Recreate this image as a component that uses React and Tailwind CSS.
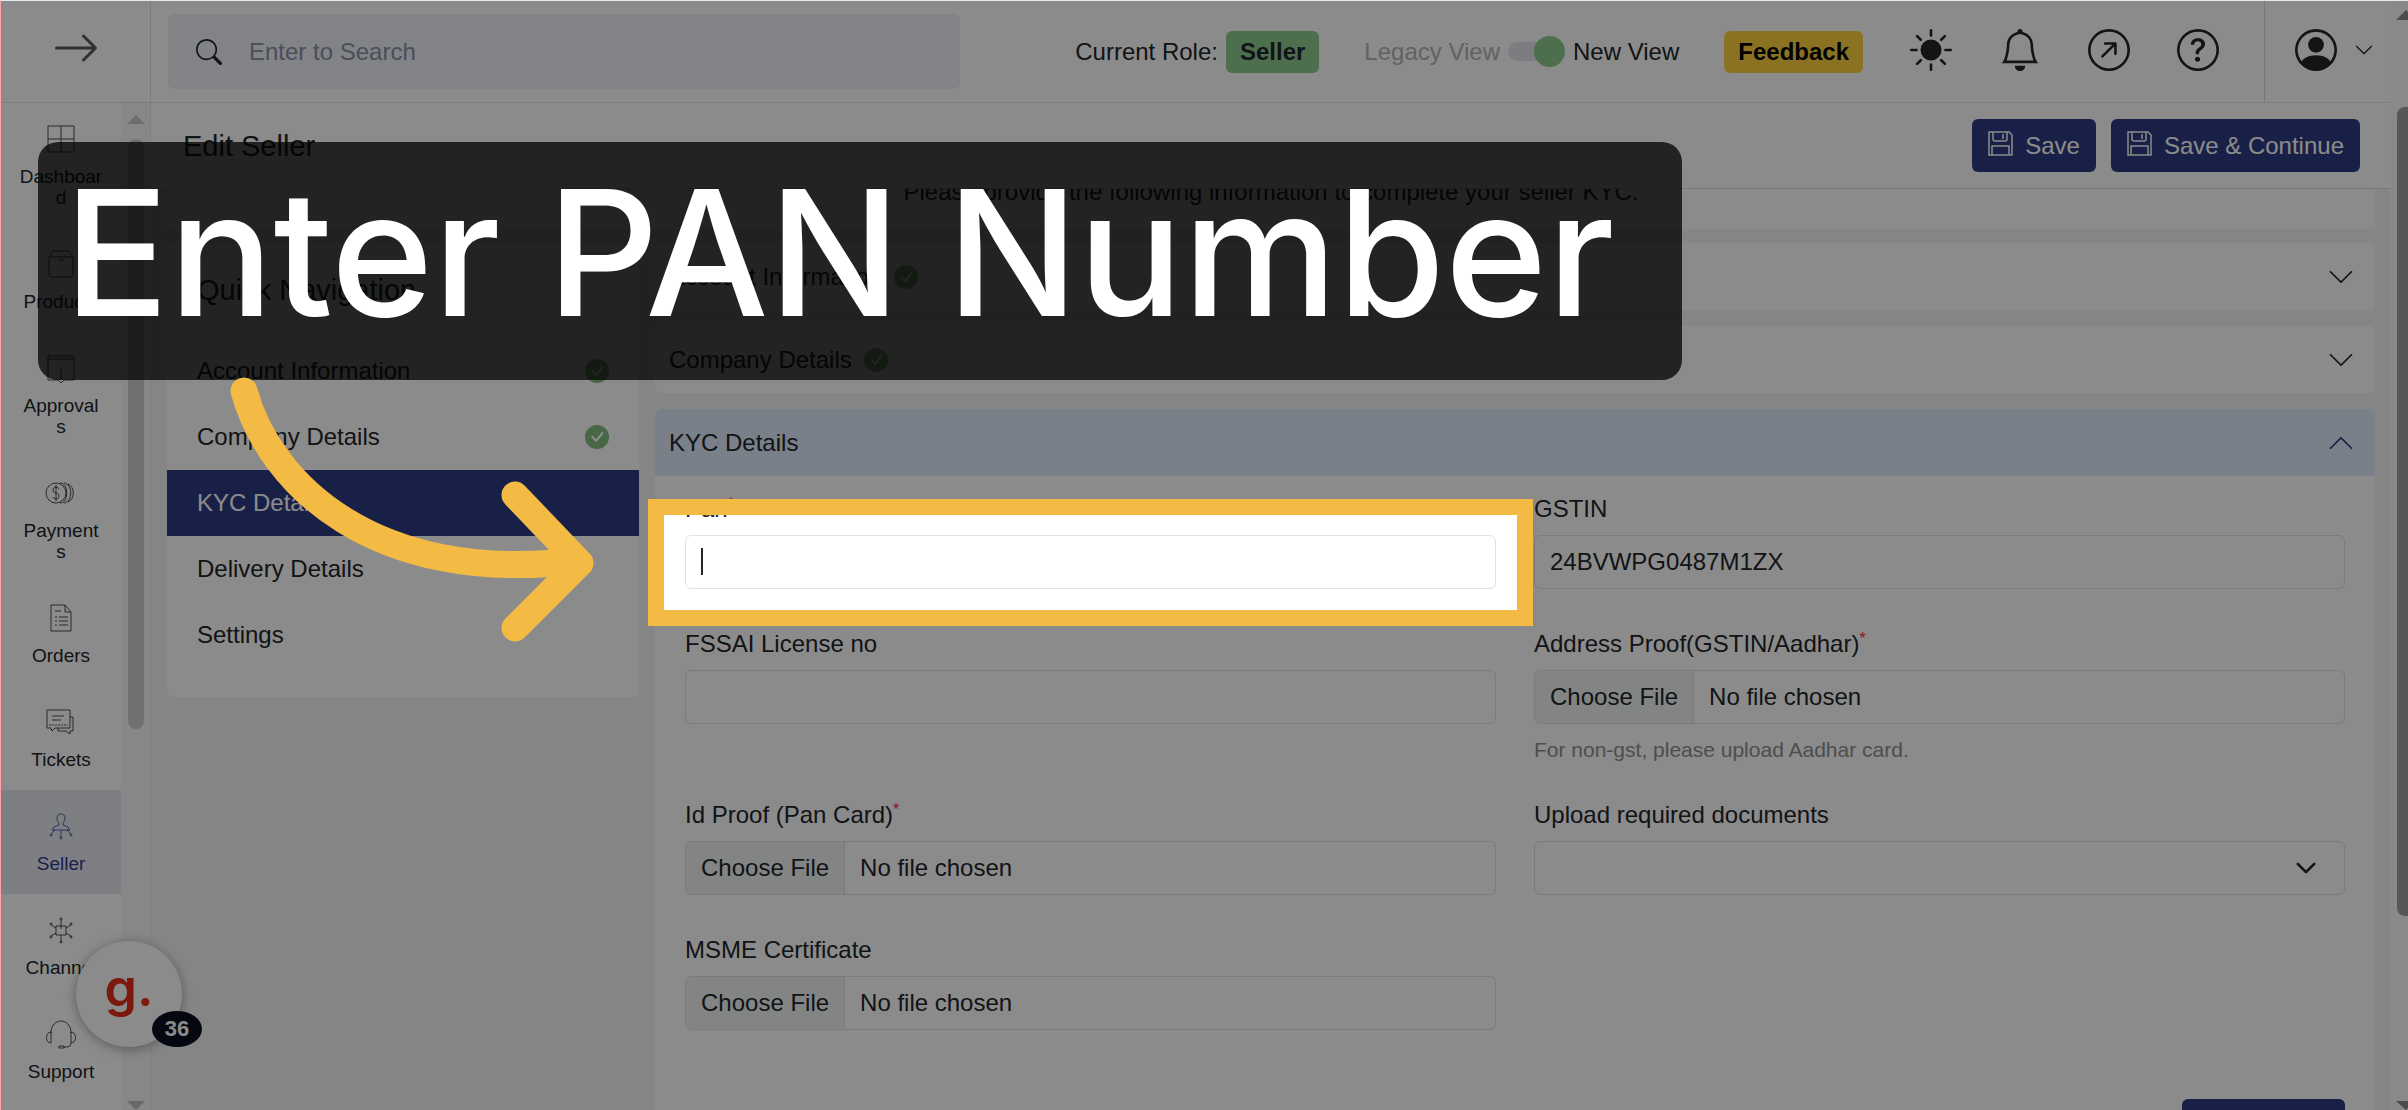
import {
  BsArrowRight,
  BsArrowUpRightCircle,
  BsBell,
  BsCheckCircleFill,
  BsChevronDown,
  BsChevronUp,
  BsPersonCircle,
  BsQuestionCircle,
  BsSearch,
  BsSunFill,
} from "react-icons/bs";

const menuItems = [
  { label: "Dashboard", icon: DashboardIcon },
  { label: "Products", icon: ProductsIcon },
  { label: "Approvals", icon: ApprovalsIcon },
  { label: "Payments", icon: PaymentsIcon },
  { label: "Orders", icon: OrdersIcon },
  { label: "Tickets", icon: TicketsIcon },
  { label: "Seller", icon: SellerIcon, active: true },
  { label: "Channel", icon: ChannelIcon },
  { label: "Support", icon: SupportIcon },
];

const quickLinks = [
  { label: "Account Information", done: true },
  { label: "Company Details", done: true },
  { label: "KYC Details", active: true },
  { label: "Delivery Details" },
  { label: "Settings" },
];

export default function App() {
  return (
    <div className="relative flex h-screen overflow-hidden border-l border-t border-l-rose-300 border-t-slate-200 bg-white font-['Liberation_Sans',Arial,sans-serif] text-[24px] leading-[36px] text-[#212529]">
      <div className="flex min-w-0 flex-1 flex-col">
        <Header />
        <div className="flex min-h-0 flex-1">
          <Sidebar />
          <Main />
        </div>
      </div>
      <PageScrollbar />
      <ChatWidget />
      <Callout />
    </div>
  );
}

function Header() {
  return (
    <header className="flex h-[102px] shrink-0 border-b border-[#e3e5ea]">
      <button
        type="button"
        aria-label="Expand menu"
        className="flex w-[150px] shrink-0 items-center justify-center border-r border-[#e3e5ea] pb-2 text-[#5a5a5a]"
      >
        <BsArrowRight className="h-12 w-12" />
      </button>

      <label className="my-[13px] ml-[17px] flex w-[792px] items-center gap-[27px] rounded-md bg-[#edf0f7] pl-7">
        <BsSearch className="h-[26px] w-[26px] shrink-0" />
        <span className="sr-only">Search</span>
        <input
          type="search"
          placeholder="Enter to Search"
          className="min-w-0 flex-1 bg-transparent outline-none placeholder:text-[#8a8fa3]"
        />
      </label>

      <div className="ml-auto flex items-center gap-[47px] pr-[45px]">
        <div className="flex items-center gap-[45px]">
          <div className="flex items-center gap-2">
            <span>Current Role:</span>
            <span className="rounded-md bg-[#8fcb8d] px-[14px] py-[3px] font-bold">
              Seller
            </span>
          </div>
          <label className="flex items-center gap-2">
            <span className="text-[#b4b4b4]">Legacy View</span>
            <input
              type="checkbox"
              defaultChecked
              className="relative h-[19px] w-[57px] appearance-none rounded-full bg-[#e2e5ec] before:absolute before:-top-[6px] before:right-0 before:h-[31px] before:w-[31px] before:rounded-full before:bg-[#8fcb8d]"
            />
            <span>New View</span>
          </label>
          <button
            type="button"
            className="rounded-md bg-[#ffd140] px-[14px] py-[3px] font-bold text-black"
          >
            Feedback
          </button>
        </div>
        <IconButton icon={BsSunFill} label="Theme" />
        <IconButton icon={BsBell} label="Notifications" />
        <IconButton icon={BsArrowUpRightCircle} label="Open" />
        <IconButton icon={BsQuestionCircle} label="Help" />
      </div>
      <button
        type="button"
        aria-label="Account"
        className="flex w-[126px] items-center gap-[17px] border-l border-[#d9dbe0] pb-1 pl-[30px]"
      >
        <BsPersonCircle className="h-[42px] w-[42px]" />
        <BsChevronDown className="h-5 w-5" />
      </button>
    </header>
  );
}

function IconButton({ icon: Icon, label }) {
  return (
    <button type="button" aria-label={label} className="pb-1">
      <Icon className="h-[42px] w-[42px]" />
    </button>
  );
}

function Sidebar() {
  return (
    <aside className="flex w-[150px] shrink-0 overflow-hidden border-r border-[#e6e7ea]">
      <nav className="w-[120px] shrink-0">
        {menuItems.map(({ label, icon: Icon, active }) => (
          <a
            key={label}
            href="#"
            className={
              active
                ? "flex flex-col items-center gap-[11px] bg-[#e6e9f0] py-5 text-[#35398f]"
                : "flex flex-col items-center gap-[11px] py-5"
            }
          >
            <svg
              viewBox="0 0 32 32"
              fill="none"
              stroke="currentColor"
              strokeOpacity="0.8"
              className="h-8 w-8"
            >
              <Icon />
            </svg>
            <span className="w-[83px] break-all text-center text-[19px] leading-[21px]">
              {label}
            </span>
          </a>
        ))}
      </nav>
      <div className="flex flex-1 flex-col items-center bg-[#f7f7f8] pt-3">
        <svg viewBox="0 0 18 9" className="h-[9px] w-[18px] text-[#c9c9c9]">
          <path d="M0 9 9 0l9 9z" fill="currentColor" />
        </svg>
        <div className="mt-[15px] h-[590px] w-4 rounded-full bg-[#cdcdcd]" />
        <svg
          viewBox="0 0 18 9"
          className="mt-auto h-[9px] w-[18px] text-[#c0c0c0]"
        >
          <path d="M0 0h18L9 9z" fill="currentColor" />
        </svg>
      </div>
    </aside>
  );
}

function Main() {
  return (
    <main className="flex min-w-0 flex-1 flex-col bg-[#f5f5f6]">
      <div className="flex h-[86px] shrink-0 items-center justify-between border-b border-[#dcdde0] bg-white pl-8 pr-[30px]">
        <h1 className="text-[29px]">Edit Seller</h1>
        <div className="flex gap-[15px]">
          <SaveButton>Save</SaveButton>
          <SaveButton>Save &amp; Continue</SaveButton>
        </div>
      </div>

      <div className="flex min-h-0 flex-1 flex-col pl-4 pr-[15px]">
        {/* scrolled under the toolbar */}
        <div className="h-10 shrink-0 overflow-hidden bg-white">
          <p className="-mt-[15px] text-center">
            Please provide the following information to complete your seller
            KYC.
          </p>
        </div>
        <div className="mt-[14px] flex items-start gap-4">
          <QuickNavigation />
          <div className="flex min-w-0 flex-1 flex-col gap-4">
            <Panel title="Account Information" done />
            <Panel title="Company Details" done />
            <KycPanel />
          </div>
        </div>
      </div>
    </main>
  );
}

function SaveButton({ children }) {
  return (
    <button
      type="button"
      className="flex h-[53px] items-center gap-3 rounded-md bg-[#2f3c82] px-4 text-white"
    >
      <svg
        viewBox="0 0 25 25"
        fill="none"
        stroke="currentColor"
        strokeWidth="1.5"
        className="mb-1 h-[25px] w-[25px]"
      >
        <path d="M1 1h20l3 3v20H1zM5 1v7q0 2 2 2h10q2 0 2-2V1M15 3v5M4 24v-9h17v9" />
      </svg>
      {children}
    </button>
  );
}

function QuickNavigation() {
  return (
    <nav className="w-[472px] shrink-0 overflow-hidden rounded-md bg-white pb-[29px] pt-[29px]">
      <h2 className="mb-[30px] px-[30px] text-[29px]">Quick Navigation</h2>
      {quickLinks.map(({ label, done, active }) => (
        <a
          key={label}
          href="#"
          className={
            active
              ? "flex h-[66px] items-center justify-between bg-[#2f3c82] px-[30px] text-white"
              : "flex h-[66px] items-center justify-between px-[30px]"
          }
        >
          {label}
          {done && <BsCheckCircleFill className="h-6 w-6 text-[#84bd82]" />}
        </a>
      ))}
    </nav>
  );
}

function Panel({ title, done }) {
  return (
    <section className="rounded-md bg-white">
      <button
        type="button"
        className="flex h-[67px] w-full items-center gap-3 pl-[14px] pr-5"
      >
        {title}
        {done && <BsCheckCircleFill className="h-6 w-6 text-[#84bd82]" />}
        <BsChevronDown className="ml-auto h-7 w-7" />
      </button>
    </section>
  );
}

function KycPanel() {
  return (
    <section className="bg-white">
      <button
        type="button"
        className="flex h-[67px] w-full items-center rounded-t-md bg-[#dfebfd] pl-[14px] pr-5"
      >
        KYC Details
        <BsChevronUp className="ml-auto h-7 w-7 text-[#2f3c82]" />
      </button>
      <div className="px-[30px] pt-[15px]">
        <div className="grid grid-cols-2 gap-x-[38px] gap-y-[37px]">
          <div className="relative">
            <Field id="pan" label="Pan" required>
              <input id="pan" type="text" className={inputClass} />
            </Field>
            <span className="absolute bottom-[14px] left-4 h-[27px] w-[2px] bg-[#212529]" />
            {/* spotlight: its shadow dims the rest of the page */}
            <div className="pointer-events-none absolute -bottom-[37px] -left-[37px] -right-[37px] top-2 z-40 border-[16px] border-[#f4bb44] shadow-[0_0_0_4000px_rgba(0,0,0,0.455)]" />
          </div>
          <Field id="gstin" label="GSTIN">
            <input
              id="gstin"
              type="text"
              defaultValue="24BVWPG0487M1ZX"
              className={inputClass}
            />
          </Field>
          <Field id="fssai" label="FSSAI License no">
            <input id="fssai" type="text" className={inputClass} />
          </Field>
          <Field id="address-proof" label="Address Proof(GSTIN/Aadhar)" required>
            <input id="address-proof" type="file" className={fileClass} />
            <p className="mt-4 text-[21px] leading-[20px] text-[#8b8f94]">
              For non-gst, please upload Aadhar card.
            </p>
          </Field>
          <Field id="id-proof" label="Id Proof (Pan Card)" required>
            <input id="id-proof" type="file" className={fileClass} />
          </Field>
          <Field id="documents" label="Upload required documents">
            <div className="relative">
              <select id="documents" className={inputClass}>
                <option></option>
              </select>
              <BsChevronDown
                strokeWidth={1}
                className="pointer-events-none absolute right-7 top-4 h-[22px] w-[22px]"
              />
            </div>
          </Field>
          <Field id="msme" label="MSME Certificate">
            <input id="msme" type="file" className={fileClass} />
          </Field>
        </div>
        <div className="mt-[69px] flex justify-end">
          <button
            type="button"
            aria-label="Continue"
            className="h-[53px] w-[163px] rounded-md bg-[#2f3c82] text-white"
          />
        </div>
      </div>
    </section>
  );
}

const inputClass =
  "block h-[54px] w-full appearance-none rounded-md border border-[#dee2e6] bg-transparent px-[15px] outline-none";

const fileClass =
  "block h-[54px] w-full overflow-hidden rounded-md border border-[#dee2e6] file:mr-[15px] file:h-[52px] file:border-0 file:border-r file:border-solid file:border-[#dee2e6] file:bg-[#f1f4f4] file:px-[15px]";

function Field({ id, label, required, children }) {
  return (
    <div>
      <label htmlFor={id} className="mb-2 block h-9">
        {label}
        {required && <sup className="text-[16px] text-red-500">*</sup>}
      </label>
      {children}
    </div>
  );
}

function PageScrollbar() {
  return (
    <div className="flex w-[18px] shrink-0 flex-col items-end overflow-hidden bg-[#fcfcfc] pt-[9px]">
      <svg viewBox="0 0 12 10" className="h-[10px] w-3 text-[#8a8a8a]">
        <path d="M0 10 10 0l2 2v8z" fill="currentColor" />
      </svg>
      <div className="mt-[87px] h-[809px] w-[11px] rounded-l-lg bg-[#a0a0a0]" />
      <svg viewBox="0 0 12 9" className="mt-auto h-[9px] w-3 text-[#8a8a8a]">
        <path d="M0 0h12v7l-2 2z" fill="currentColor" />
      </svg>
    </div>
  );
}

function ChatWidget() {
  return (
    <button
      type="button"
      aria-label="Open help, 36 new"
      className="absolute bottom-[63px] left-[75px] z-30 flex h-[106px] w-[106px] items-center justify-center rounded-full bg-white pb-3 font-['Inter',sans-serif] text-[52px] font-semibold text-[#e62d16] shadow-[0_2px_12px_rgba(0,0,0,0.35)]"
    >
      g.
      <span className="absolute -right-5 bottom-0 flex h-9 w-[50px] items-center justify-center rounded-[50%] bg-[#0b1020] font-['Liberation_Sans',Arial,sans-serif] text-[22px] font-bold text-white">
        36
      </span>
    </button>
  );
}

function Callout() {
  return (
    <>
      <div className="absolute left-[37px] top-[141px] z-50 flex h-[238px] w-[1644px] items-center whitespace-nowrap rounded-[20px] bg-black/75 pb-4 pl-[26px] font-['Inter',sans-serif] text-[174px] font-medium leading-none text-white">
        Enter PAN Number
      </div>
      <svg
        viewBox="0 0 400 290"
        fill="none"
        stroke="#f4bb44"
        strokeWidth="27"
        strokeLinecap="round"
        strokeLinejoin="round"
        className="absolute left-[219px] top-[369px] z-50 h-[290px] w-[400px]"
      >
        <path d="M24 21C50 115 155 215 355 191" />
        <path d="M295 125l65 68-65 65" />
      </svg>
    </>
  );
}

function DashboardIcon() {
  return <path d="M3 3h26v26H3zM16 3v26M3 16h26" />;
}

function ProductsIcon() {
  return <path d="M4 9l4-6h16l4 6v17q0 3-3 3H7q-3 0-3-3zM4 9h24M13 12h6" />;
}

function ApprovalsIcon() {
  return <path d="M3 4h26v24H19l-3 3-3-3H3zM3 7h26M16 15v13" />;
}

function PaymentsIcon() {
  return (
    <>
      <circle cx="11" cy="16" r="10" />
      <path d="M14 12q-1-2-3-2c-4 0-4 6 0 6s4 6 0 6q-2 0-3-2M11 8v16M15 6c9-1 9 21 0 20M19 6c9 1 9 19 0 20M23 7c7 3 7 15 0 18" />
    </>
  );
}

function OrdersIcon() {
  return (
    <path d="M6 3h14l6 7v19H6zM20 3v7h6M10 9h6M10 15h2M14 15h9M10 19h2M14 19h9M10 23h2M14 23h9" />
  );
}

function TicketsIcon() {
  return (
    <>
      <path d="M2 4h23v18H10l-3 3-1-3H2zM25 11h3v14h-3v3l-4-3h-8v-3M7 10h12M7 14h9" />
      <path d="M4 19h19" strokeDasharray="2 1" />
    </>
  );
}

function SellerIcon() {
  return (
    <>
      <path d="M16 4c-5 0-5 6-2 9v2l-5 2-2 3h18l-2-3-5-2v-2c3-3 3-9-2-9zM16 20v7M10 20l-4 4M22 20l4 4" />
      <circle cx="16" cy="28" r="1" />
      <circle cx="6" cy="25" r="1" />
      <circle cx="26" cy="25" r="1" />
    </>
  );
}

function ChannelIcon() {
  return (
    <>
      <path d="M11 12h10v9H11zM16 12V6M16 21v6M11 14l-5-3M21 14l5-3M11 19l-5 3M21 19l5 3M16 12v3" />
      <circle cx="16" cy="5" r="1" />
      <circle cx="16" cy="28" r="1" />
      <circle cx="6" cy="10" r="1" />
      <circle cx="26" cy="10" r="1" />
      <circle cx="6" cy="23" r="1" />
      <circle cx="26" cy="23" r="1" />
    </>
  );
}

function SupportIcon() {
  return (
    <path d="M6 15C6-1 26-1 26 15M6 14c-6 0-6 11 0 11zM26 14c6 0 6 11 0 11zM26 25q0 4-4 4h-3M14 28h5v2h-5z" />
  );
}
